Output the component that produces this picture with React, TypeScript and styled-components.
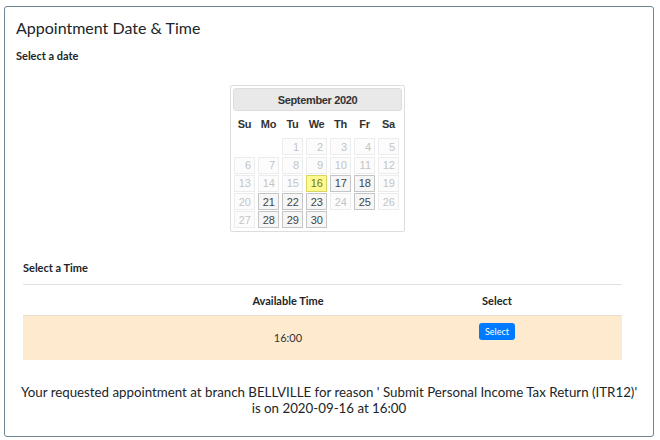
import styled, { createGlobalStyle, css } from 'styled-components';

const GlobalStyle = createGlobalStyle`
  body {
    margin: 0;
    background: #ffffff;
    font-family: Lato, "Open Sans", sans-serif;
    color: #212529;
  }
`;

type DayState = 'empty' | 'disabled' | 'open' | 'active';

const openDays = [17, 18, 21, 22, 23, 25, 28, 29, 30];
const selectedDay = 16;

const buildDays = () => {
  const cells: { day?: number; state: DayState }[] = [];
  // September 2020 starts on a Tuesday
  cells.push({ state: 'empty' }, { state: 'empty' });
  for (let d = 1; d <= 30; d++) {
    let state: DayState = 'disabled';
    if (d === selectedDay) state = 'active';
    else if (openDays.includes(d)) state = 'open';
    cells.push({ day: d, state });
  }
  return cells;
};

const weekDays = ['Su', 'Mo', 'Tu', 'We', 'Th', 'Fr', 'Sa'];

const App = () => {
  const days = buildDays();
  return (
    <>
      <GlobalStyle />
      <Card>
        <Title>Appointment Date &amp; Time</Title>
        <Label>Select a date</Label>
        <CalendarRow>
          <Calendar>
            <CalendarHeader>September 2020</CalendarHeader>
            <DayGrid>
              {weekDays.map((w) => (
                <WeekDay key={w}>{w}</WeekDay>
              ))}
              {days.map((c, i) =>
                c.state === 'empty' ? (
                  <span key={i} />
                ) : (
                  <DayCell key={i} $state={c.state}>
                    {c.day}
                  </DayCell>
                )
              )}
            </DayGrid>
          </Calendar>
        </CalendarRow>
        <TimeSection>
          <Label>Select a Time</Label>
          <Rule />
          <TimeTable>
            <HeadCell />
            <HeadCell>Available Time</HeadCell>
            <HeadCell>Select</HeadCell>
            <HeadCell />
            <BodyRow>
              <BodyCell />
              <BodyCell>16:00</BodyCell>
              <BodyCell $top>
                <SelectButton>Select</SelectButton>
              </BodyCell>
              <BodyCell />
            </BodyRow>
          </TimeTable>
        </TimeSection>
        <Summary>
          Your requested appointment at branch BELLVILLE for reason ' Submit Personal Income Tax Return (ITR12)'
          <br />
          is on 2020-09-16 at 16:00
        </Summary>
      </Card>
    </>
  );
};

export default App;

const Card = styled.div`
  margin: 6px 6px 3px 4px;
  height: 431px;
  box-sizing: border-box;
  border: 1px solid #6e8596;
  border-radius: 3px;
  padding: 10px 11px;
`;

const Title = styled.h1`
  margin: 0;
  font-size: 16px;
  font-weight: 400;
  line-height: 22px;
  color: #212529;
`;

const Label = styled.div`
  margin-top: 9px;
  font-size: 11px;
  font-weight: 700;
  line-height: 16px;
  color: #212529;
`;

const CalendarRow = styled.div`
  display: flex;
  justify-content: center;
  margin-top: 21px;
  padding-right: 23px;
`;

const Calendar = styled.div`
  width: 175px;
  box-sizing: border-box;
  border: 1px solid #dddddd;
  border-radius: 2px;
  padding: 2px 2px 3px 2px;
  font-family: "Liberation Sans", Arial, sans-serif;
`;

const CalendarHeader = styled.div`
  height: 23px;
  box-sizing: border-box;
  border: 1px solid #dddddd;
  border-radius: 3px;
  background: #e9e9e9;
  color: #333333;
  font-size: 11px;
  font-weight: 700;
  letter-spacing: -0.35px;
  display: flex;
  align-items: center;
  justify-content: center;
`;

const DayGrid = styled.div`
  display: grid;
  grid-template-columns: repeat(7, 21px);
  grid-template-rows: 26px;
  grid-auto-rows: 17px;
  column-gap: 3px;
  row-gap: 1.3px;
  padding: 0 1px;
`;

const WeekDay = styled.div`
  font-size: 11px;
  font-weight: 700;
  letter-spacing: -0.3px;
  color: #333333;
  display: flex;
  align-items: center;
  justify-content: center;
  padding-bottom: 1px;
`;

const DayCell = styled.div<{ $state: DayState }>`
  box-sizing: border-box;
  border: 1px solid #c5c5c5;
  background: #f6f6f6;
  color: #454545;
  font-size: 11px;
  display: flex;
  align-items: center;
  justify-content: flex-end;
  padding-right: 3px;

  ${({ $state }) =>
    $state === 'disabled' &&
    css`
      border-color: #ececec;
      background: #fcfcfc;
      color: #c4c4c4;
    `}

  ${({ $state }) =>
    $state === 'active' &&
    css`
      border-color: #dad55e;
      background: #fffa90;
      color: #777620;
    `}
`;

const TimeSection = styled.div`
  margin-top: 28px;
  padding: 0 20px 0 7px;
`;

const Rule = styled.div`
  margin-top: 8px;
  height: 1px;
  background: #dee2e6;
`;

const TimeTable = styled.div`
  display: grid;
  grid-template-columns: 160px 210px 208px 1fr;
`;

const HeadCell = styled.div`
  height: 30px;
  display: flex;
  align-items: center;
  justify-content: center;
  font-size: 11px;
  font-weight: 700;
  color: #212529;
  border-bottom: 1px solid #eadfcf;
`;

const BodyRow = styled.div`
  display: contents;
`;

const BodyCell = styled.div<{ $top?: boolean }>`
  height: 44px;
  background: #fdeacf;
  display: flex;
  align-items: ${({ $top }) => ($top ? 'flex-start' : 'center')};
  justify-content: center;
  padding-top: ${({ $top }) => ($top ? '7px' : '0')};
  padding-bottom: ${({ $top }) => ($top ? '0' : '2px')};
  box-sizing: border-box;
  font-size: 11px;
  color: #333333;
`;

const SelectButton = styled.button`
  height: 17px;
  padding: 0 6px;
  border: none;
  border-radius: 3px;
  background: #007bff;
  color: #ffffff;
  font-family: Lato, sans-serif;
  font-size: 9px;
  line-height: 17px;
`;

const Summary = styled.p`
  margin: 24px 0 0;
  text-align: center;
  font-size: 13.3px;
  line-height: 16px;
  color: #212529;
`;
